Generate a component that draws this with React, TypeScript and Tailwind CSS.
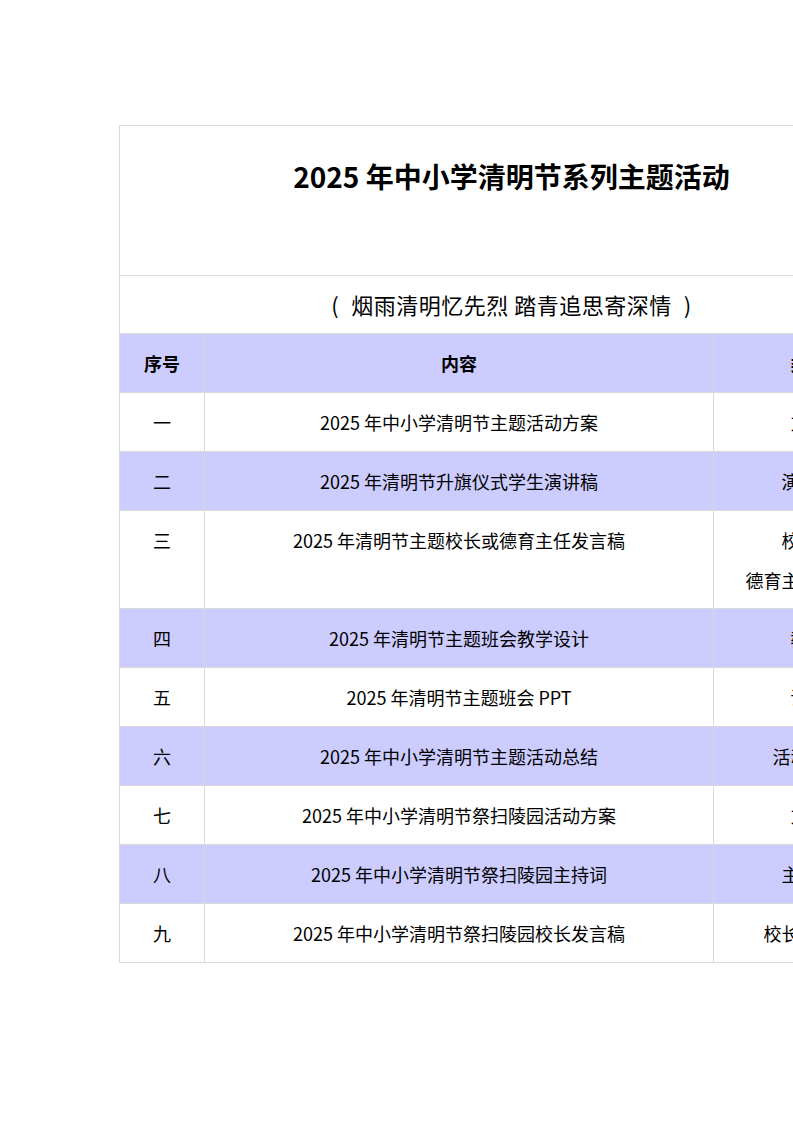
import React from "react";

const rows = [
  { no: "一", content: "2025 年中小学清明节主题活动方案", kind: ["方案"], shade: false },
  { no: "二", content: "2025 年清明节升旗仪式学生演讲稿", kind: ["演讲稿"], shade: true },
  { no: "三", content: "2025 年清明节主题校长或德育主任发言稿", kind: ["校长或", "德育主任发言稿"], shade: false },
  { no: "四", content: "2025 年清明节主题班会教学设计", kind: ["教案"], shade: true },
  { no: "五", content: "2025 年清明节主题班会 PPT", kind: ["课件"], shade: false },
  { no: "六", content: "2025 年中小学清明节主题活动总结", kind: ["活动总结"], shade: true },
  { no: "七", content: "2025 年中小学清明节祭扫陵园活动方案", kind: ["方案"], shade: false },
  { no: "八", content: "2025 年中小学清明节祭扫陵园主持词", kind: ["主持词"], shade: true },
  { no: "九", content: "2025 年中小学清明节祭扫陵园校长发言稿", kind: ["校长发言稿"], shade: false },
];

const cell = "border border-[#d9d9d9] text-center align-top pt-[9px] pb-[8px] leading-[41px]";

export default function App() {
  return (
    <div
      className="w-[793px] h-[1122px] overflow-hidden bg-white text-black"
      style={{ fontFamily: '"Noto Sans CJK SC", "Noto Sans", sans-serif' }}
    >
      <div className="pt-[125px] pl-[119px]">
        <table className="table-fixed border-collapse w-[784px] text-[18px]">
          <colgroup>
            <col className="w-[85px]" />
            <col className="w-[509px]" />
            <col className="w-[190px]" />
          </colgroup>
          <tbody>
            {/* Title */}
            <tr className="h-[150px]">
              <td colSpan={3} className="border border-[#d9d9d9] text-center align-top pt-[32px]">
                <span className="text-[28px] font-bold leading-[36px]">2025 年中小学清明节系列主题活动</span>
              </td>
            </tr>
            <tr className="h-[58px]">
              <td colSpan={3} className="border border-[#d9d9d9] text-center align-middle">
                <span className="text-[22px] leading-[28px] tracking-[0.5px]">
                  <span className="inline-block w-[20px] text-left">(</span>
                  烟雨清明忆先烈 踏青追思寄深情
                  <span className="inline-block w-[20px] text-right">)</span>
                </span>
              </td>
            </tr>

            {/* Header */}
            <tr className="bg-[#ccccff] font-bold">
              <td className={cell}>序号</td>
              <td className={cell}>内容</td>
              <td className={cell}>类型</td>
            </tr>

            {rows.map((r) => (
              <tr key={r.no} className={r.shade ? "bg-[#ccccff]" : "bg-white"}>
                <td className={cell}>{r.no}</td>
                <td className={cell}>{r.content}</td>
                <td className={cell}>
                  {r.kind.map((k) => (
                    <div key={k} className={r.kind.length > 1 ? "leading-[40px]" : ""}>
                      {k}
                    </div>
                  ))}
                </td>
              </tr>
            ))}
          </tbody>
        </table>
      </div>
    </div>
  );
}
